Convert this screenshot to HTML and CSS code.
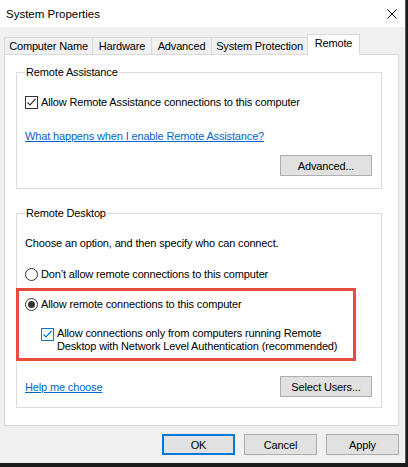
FILE: index.html
```html
<!DOCTYPE html>
<html>
<head>
    <link rel="stylesheet" href="styles.css">
</head>
<body>
    <div class="window">
        <div class="titlebar">
            <span class="title">System Properties</span>
            <svg class="close" width="10" height="10" viewBox="0 0 10 10">
                <path d="M0.5 0.5 L9.5 9.5 M9.5 0.5 L0.5 9.5" stroke="#000" stroke-width="1" fill="none"/>
            </svg>
        </div>

        <div class="tabs">
            <div class="tab tab-name">Computer Name</div>
            <div class="tab tab-hw">Hardware</div>
            <div class="tab tab-adv">Advanced</div>
            <div class="tab tab-sys">System Protection</div>
            <div class="tab active">Remote</div>
        </div>

        <div class="panel">
            <fieldset class="group">
                <legend>Remote Assistance</legend>
                <div class="option">
                    <span class="check">
                        <svg width="11" height="11" viewBox="0 0 11 11"><path d="M1.5 5.5 L4 8 L9.5 2" stroke="#333" stroke-width="1.2" fill="none"/></svg>
                    </span>
                    <span>Allow Remote Assistance connections to this computer</span>
                </div>
                <a class="link first-link" href="#">What happens when I enable Remote Assistance?</a>
                <div class="button-row">
                    <button class="btn wide">Advanced...</button>
                </div>
            </fieldset>

            <fieldset class="group desktop">
                <legend>Remote Desktop</legend>
                <p class="hint">Choose an option, and then specify who can connect.</p>
                <div class="option radio-row">
                    <span class="radio"></span>
                    <span>Don’t allow remote connections to this computer</span>
                </div>
                <div class="highlight">
                    <div class="option">
                        <span class="radio checked"></span>
                        <span>Allow remote connections to this computer</span>
                    </div>
                    <div class="option sub">
                        <span class="check blue">
                            <svg width="11" height="11" viewBox="0 0 11 11"><path d="M1.5 5.5 L4 8 L9.5 2" stroke="#0078d7" stroke-width="1.2" fill="none"/></svg>
                        </span>
                        <span class="two-lines">Allow connections only from computers running Remote<br>Desktop with Network Level Authentication (recommended)</span>
                    </div>
                </div>
                <div class="button-row split">
                    <a class="link" href="#">Help me choose</a>
                    <button class="btn wide">Select Users...</button>
                </div>
            </fieldset>
        </div>

        <div class="footer">
            <button class="btn default">OK</button>
            <button class="btn">Cancel</button>
            <button class="btn">Apply</button>
        </div>
    </div>
</body>
</html>
```

FILE: styles.css
```css
/* Windows 10 dialog look */
html {
    background-color: #1a1a1a;
}

body {
    margin: 0;
    font-family: "Liberation Sans", Arial, sans-serif;
    font-size: 11px;
    letter-spacing: -0.15px;
    color: #000;
}

.window {
    width: 405px;
    height: 463px;
    background-color: #f0f0f0;
    border-right: 1px solid #5a5a5a;
}

.titlebar {
    height: 27px;
    background-color: #fff;
    display: flex;
    align-items: center;
    justify-content: space-between;
    padding: 0 8px 0 6px;
}

.title {
    font-size: 11.5px;
    letter-spacing: 0;
}

.tabs {
    display: flex;
    align-items: flex-end;
    height: 20px;
    margin-top: 7px;
    padding-left: 4px;
}

.tab {
    height: 17px;
    line-height: 17px;
    box-sizing: border-box;
    border: 1px solid #d9d9d9;
    border-bottom: none;
    margin-left: -1px;
    text-align: center;
    background-color: #f0f0f0;
}

.tab:first-child {
    margin-left: 0;
}

.tab-name { width: 89px; }
.tab-hw { width: 60px; }
.tab-adv { width: 61px; }
.tab-sys { width: 97px; }

.tab.active {
    width: 53px;
    height: 21px;
    line-height: 17px;
    margin-bottom: -1px;
    background-color: #fff;
    position: relative;
    z-index: 1;
}

.panel {
    width: 395px;
    box-sizing: border-box;
    margin-left: 4px;
    padding: 10px 0 17px 11px;
    background-color: #fff;
    border: 1px solid #d9d9d9;
}

.group {
    width: 366px;
    box-sizing: border-box;
    margin: 0;
    padding: 16px 9px 12px 8px;
    border: 1px solid #dcdcdc;
    min-inline-size: 0;
}

.group legend {
    padding: 0 1px;
    line-height: 14px;
}

.desktop {
    margin-top: 17px;
    padding-bottom: 10px;
}

.option {
    display: flex;
    align-items: center;
    height: 14px;
    line-height: 14px;
}

.check {
    width: 13px;
    height: 13px;
    box-sizing: border-box;
    border: 1px solid #333;
    margin-right: 3px;
    display: flex;
    align-items: center;
    justify-content: center;
    flex-shrink: 0;
}

.check.blue {
    border-color: #0078d7;
}

.radio {
    width: 13px;
    height: 13px;
    box-sizing: border-box;
    border: 1px solid #333;
    border-radius: 50%;
    margin-right: 3px;
    display: flex;
    align-items: center;
    justify-content: center;
    flex-shrink: 0;
}

.radio.checked::after {
    content: "";
    width: 7px;
    height: 7px;
    border-radius: 50%;
    background-color: #333;
}

.link {
    display: inline-block;
    color: #0066cc;
    text-decoration: underline;
    line-height: 14px;
}

.first-link {
    margin-top: 20px;
}

.button-row {
    display: flex;
    justify-content: flex-end;
    align-items: center;
    margin-top: 12px;
}

.button-row.split {
    justify-content: space-between;
    margin-top: 15px;
}

.btn {
    font-family: inherit;
    font-size: 11px;
    letter-spacing: -0.15px;
    color: #000;
    width: 73px;
    height: 21px;
    padding: 0;
    background-color: #e1e1e1;
    border: 1px solid #adadad;
}

.btn.wide {
    width: 92px;
}

.btn.default {
    border-color: #0078d7;
    box-shadow: inset 0 0 0 1px #0078d7;
}

.hint {
    margin: 0;
    line-height: 14px;
}

.radio-row {
    margin-top: 17px;
}

.highlight {
    margin: 7px 0 0 -9px;
    width: 340px;
    box-sizing: border-box;
    border: 3px solid #e74c3c;
    padding: 6px 0 5px 6px;
}

.option.sub {
    margin: 16px 0 0 16px;
    height: auto;
    align-items: flex-start;
}

.option.sub .check {
    margin-top: 1px;
}

.two-lines {
    line-height: 13px;
}

.footer {
    display: flex;
    justify-content: flex-end;
    gap: 9px;
    margin-top: 8px;
    padding-right: 6px;
}
```
